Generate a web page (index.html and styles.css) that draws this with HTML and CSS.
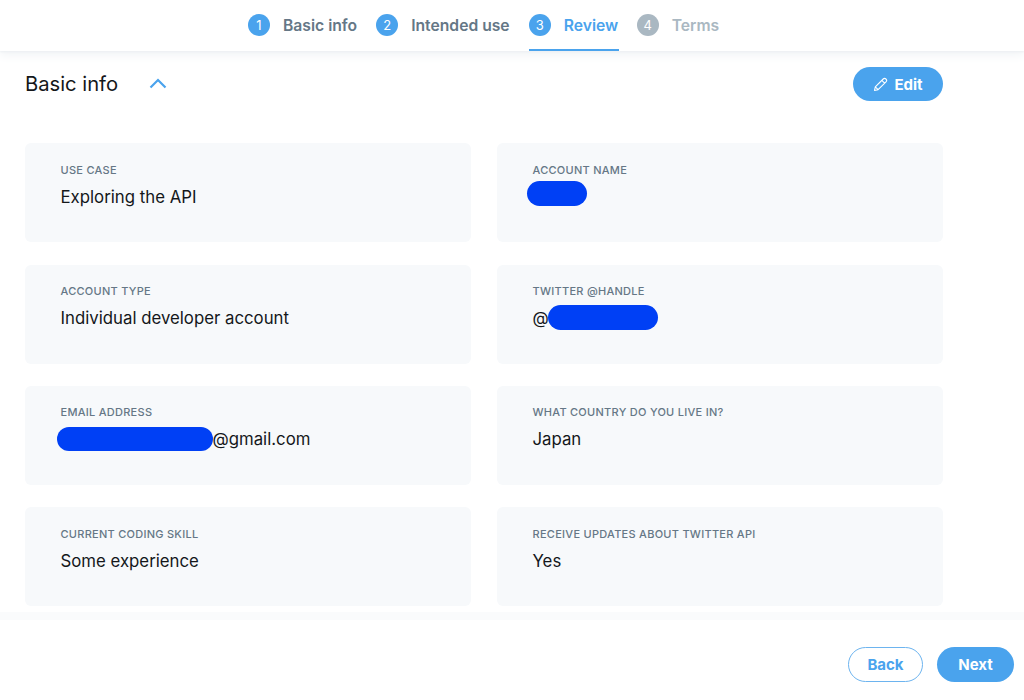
FILE: index.html
```html
<!DOCTYPE html>
<html lang="en">
<head>
<meta charset="utf-8">
<title>Review</title>
<link rel="stylesheet" href="styles.css">
</head>
<body>
<header class="stepper">
  <div class="step"><span class="num">1</span><span class="step-label">Basic info</span></div>
  <div class="step"><span class="num">2</span><span class="step-label">Intended use</span></div>
  <div class="step active"><span class="num">3</span><span class="step-label">Review</span></div>
  <div class="step todo"><span class="num">4</span><span class="step-label">Terms</span></div>
</header>
<main class="content">
  <div class="section-head">
    <h2 class="title">Basic info</h2>
    <svg class="chevron" width="18" height="12" viewBox="0 0 18 12" aria-hidden="true"><path d="M1.5 10.5 L9 3 L16.5 10.5" fill="none" stroke="#4aa3ed" stroke-width="2.2"/></svg>
    <button class="btn btn-solid btn-edit">
      <svg width="15" height="15" viewBox="0 0 15 15" aria-hidden="true"><path d="M1.5 13.5 L2.3 9.9 L10.2 2 C11 1.2 12.1 1.2 12.9 2 L13 2.1 C13.8 2.9 13.8 4 13 4.8 L5.1 12.7 Z M8.8 3.4 L11.6 6.2 M2.3 9.9 L5.1 12.7" fill="none" stroke="#fff" stroke-width="1.1" stroke-linejoin="round"/></svg>
      Edit
    </button>
  </div>
  <div class="grid">
    <section class="card"><div class="label">USE CASE</div><div class="value">Exploring the API</div></section>
    <section class="card"><div class="label">ACCOUNT NAME</div><div class="value"><span class="redact r-name"></span></div></section>
    <section class="card"><div class="label">ACCOUNT TYPE</div><div class="value">Individual developer account</div></section>
    <section class="card"><div class="label">TWITTER @HANDLE</div><div class="value">@<span class="redact r-handle"></span></div></section>
    <section class="card"><div class="label">EMAIL ADDRESS</div><div class="value"><span class="redact r-email"></span>@gmail.com</div></section>
    <section class="card"><div class="label">WHAT COUNTRY DO YOU LIVE IN?</div><div class="value">Japan</div></section>
    <section class="card"><div class="label">CURRENT CODING SKILL</div><div class="value">Some experience</div></section>
    <section class="card"><div class="label">RECEIVE UPDATES ABOUT TWITTER API</div><div class="value">Yes</div></section>
  </div>
</main>
<footer class="footer">
  <button class="btn btn-outline">Back</button>
  <button class="btn btn-solid btn-next">Next</button>
</footer>
</body>
</html>
```
FILE: styles.css
```css
* { box-sizing: border-box; }
html, body { margin: 0; height: 700px; overflow: hidden; }
body { background: #fff; font-family: Inter, "Liberation Sans", sans-serif; color: #14171a; display: flex; flex-direction: column; }

.stepper { height: 51px; flex: none; display: flex; padding-left: 248px; gap: 19px; background: #fff; box-shadow: 0 1px 2px #eceff2, 0 5px 9px #f3f5f7; position: relative; }
.step { display: flex; align-items: flex-start; padding-top: 14px; gap: 13px; font-size: 15.7px; font-weight: 600; color: #657786; }
.num { width: 22px; height: 22px; border-radius: 50%; background: #4aa3ed; color: #fff; font-size: 13px; font-weight: 400; display: flex; align-items: center; justify-content: center; }
.step-label { line-height: 23px; white-space: nowrap; }
.active { color: #4aa3ed; width: 90px; border-bottom: 2px solid #4aa3ed; }
.todo { color: #aab8c2; margin-left: -1px; }
.todo .num { background: #aab8c2; }

.content { flex: 1; padding: 16px 0 0 25px; }
.section-head { display: flex; align-items: center; width: 918px; height: 34px; }
.title { margin: 0; font-size: 20.2px; font-weight: 400; line-height: 34px; color: #14171a; }
.chevron { margin: -3px 0 0 31px; }

.btn { font-family: inherit; font-size: 15px; font-weight: 700; height: 35px; border-radius: 18px; border: 0; padding: 0; display: inline-flex; align-items: center; justify-content: center; }
.btn-solid { background: #4aa3ed; color: #fff; }
.btn-edit { margin-left: auto; width: 90px; height: 34px; gap: 6px; }
.btn-outline { width: 75px; background: #fff; color: #4aa3ed; border: 1px solid #6db4ef; }
.btn-next { width: 77px; }

.grid { display: grid; grid-template-columns: 446px 446px; column-gap: 26px; row-gap: 22.2px; margin-top: 42.4px; }
.card { height: 99px; background: #f7f9fb; border-radius: 6px; padding: 19.6px 35.5px 0; }
.label { font-size: 11px; font-weight: 500; line-height: 14px; letter-spacing: 0.27px; color: #657786; }
.value { font-size: 16.8px; line-height: 26px; margin-top: 7px; color: #14171a; display: flex; align-items: center; height: 26px; }
.redact { display: inline-block; background: #0040f5; border-radius: 13px; height: 25px; }
.r-name { width: 60px; margin-left: -6px; margin-top: -6px; }
.r-handle { width: 110px; margin-left: -1px; margin-top: -1px; }
.r-email { width: 156px; margin-left: -4px; height: 24px; margin-top: -1px; }

.footer { height: 80px; flex: none; margin-top: auto; display: flex; justify-content: flex-end; gap: 14px; padding: 27px 10px 0 0; background: #fff; box-shadow: 0 -8px 0 #fafbfc; }
```
